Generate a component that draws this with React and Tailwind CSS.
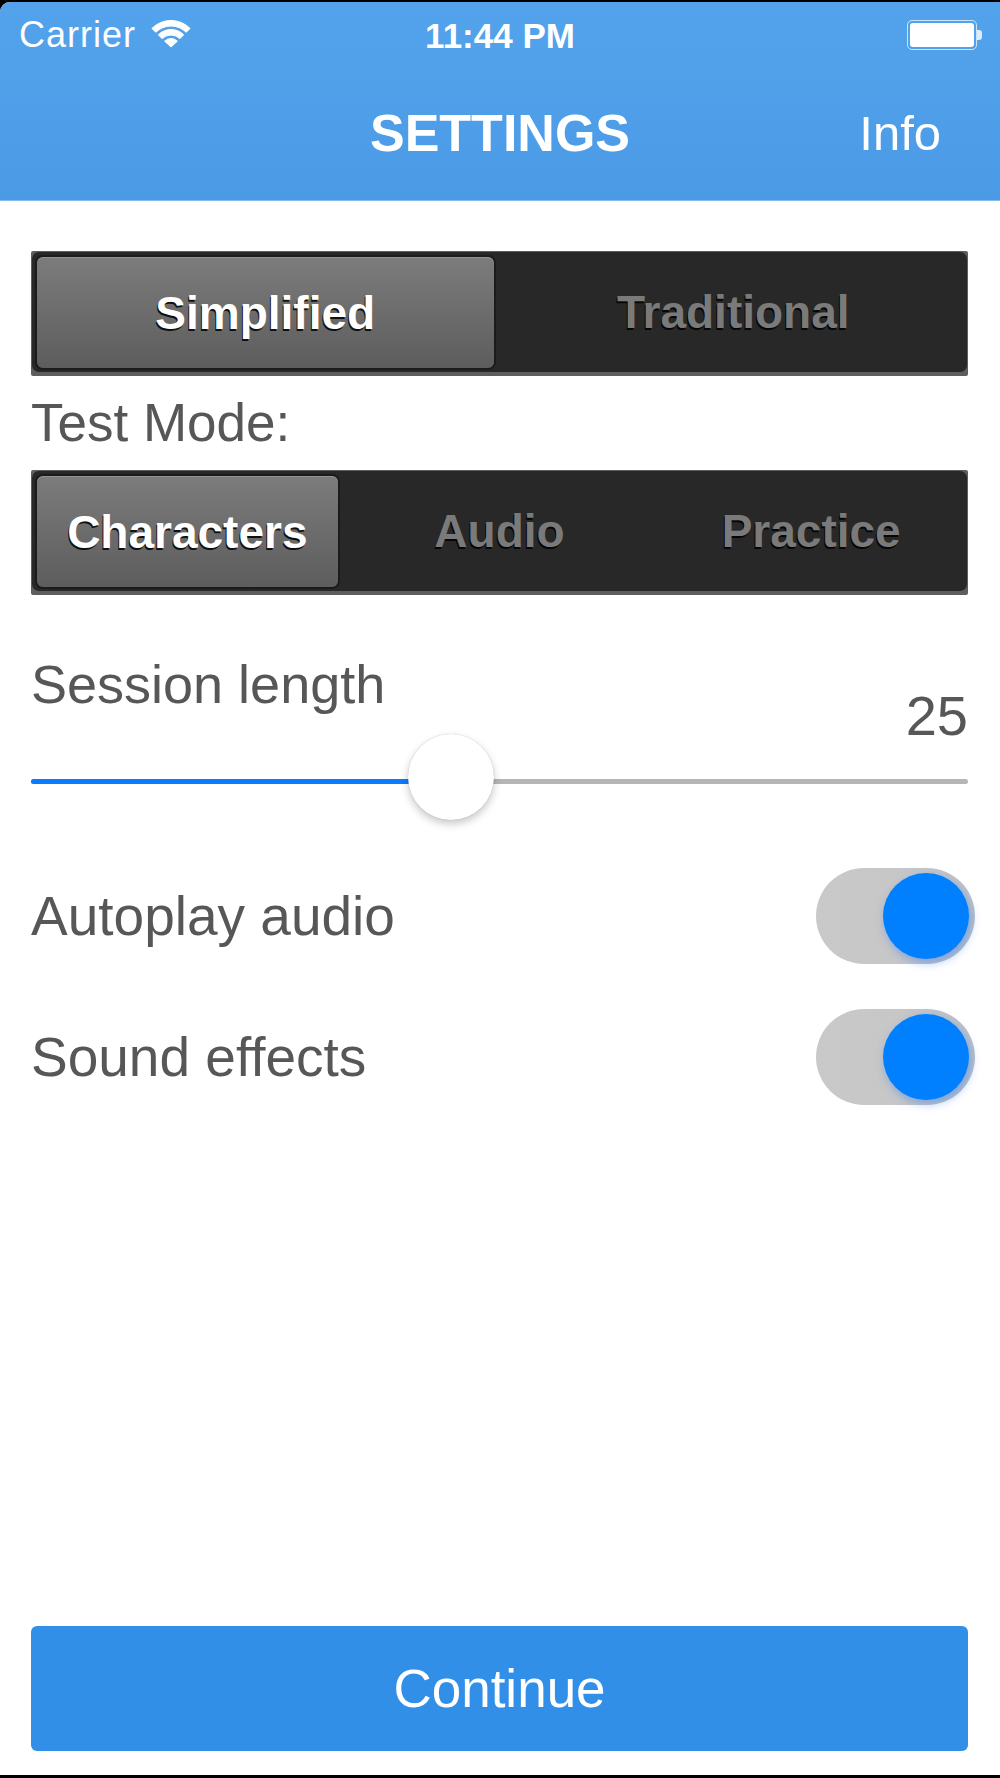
import React from "react";

function Wifi() {
  return (
    <svg width="40" height="28" viewBox="0 0 40 28" className="block">
      <g fill="#ffffff" stroke="#ffffff" strokeWidth="1" strokeLinejoin="round">
        <path d="M0.91 8.41 A27 27 0 0 1 39.09 8.41 L35.2 12.3 A21.5 21.5 0 0 0 4.8 12.3 Z" />
        <path d="M7.27 14.77 A18 18 0 0 1 32.73 14.77 L28.84 18.66 A12.5 12.5 0 0 0 11.16 18.66 Z" />
        <path d="M20 27 L13.64 21.14 A9 9 0 0 1 26.36 21.14 Z" />
      </g>
    </svg>
  );
}

function Battery() {
  return (
    <div className="flex items-center">
      <div className="w-[70px] h-[30px] rounded-[5px] border border-white/70 p-[2px]">
        <div className="w-full h-full rounded-[3px] bg-white" />
      </div>
      <div className="w-[5px] h-[10px] rounded-r-[3px] bg-white/80" />
    </div>
  );
}

function Segmented({ items, selected }) {
  const cols = items.length === 2 ? "grid-cols-2" : "grid-cols-3";
  return (
    <div className="bg-[#5e5e5e] px-px pt-px pb-[4px] rounded-[2px]">
      <div className={`grid ${cols} h-[120px] bg-[#282828] rounded-[7px]`}>
        {items.map((it, i) =>
          i === selected ? (
            <div key={it} className="pl-[5px] pr-[6px] pt-[5px] pb-[4px]">
              <div className="h-full rounded-[6px] bg-gradient-to-b from-[#7c7c7c] to-[#5d5d5d] shadow-[0_0_0_2px_#1b1b1b,inset_0_1px_0_rgba(255,255,255,0.18)] flex items-center justify-center">
                <span className="text-[46px] leading-none font-bold text-white [text-shadow:-1px_2px_0_rgba(0,0,0,0.85)]">
                  {it}
                </span>
              </div>
            </div>
          ) : (
            <div key={it} className="flex items-center justify-center">
              <span className="text-[46px] leading-none font-bold text-[#7a7a7a] [text-shadow:-1px_2px_0_rgba(0,0,0,0.85)]">
                {it}
              </span>
            </div>
          )
        )}
      </div>
    </div>
  );
}

function Toggle() {
  return (
    <div className="relative w-[159px] h-[96px] -mr-[7px] rounded-full bg-gradient-to-r from-[#c9c9c9] via-[#c7c7c7] to-[#bcc2c8]">
      <div className="absolute right-[6px] top-[5px] w-[86px] h-[86px] rounded-full bg-[#0080ff] shadow-[2px_4px_10px_rgba(0,100,255,0.35)]" />
    </div>
  );
}

export default function App() {
  return (
    <div className="w-[1000px] h-[1778px] bg-black flex flex-col overflow-hidden font-['Liberation_Sans',Arial,sans-serif]">
      <div className="h-[2px] shrink-0" />
      <div className="flex-1 bg-white rounded-tl-[10px] flex flex-col overflow-hidden">
        {/* Header */}
        <div className="bg-gradient-to-b from-[#53a3ec] to-[#4a9ae6] border-b border-[#86bdf0] shrink-0">
          <div className="h-[66px] grid grid-cols-[1fr_auto_1fr] items-center text-white">
            <div className="flex items-center pl-[19px]">
              <span className="text-[36px] leading-none tracking-[1px]">Carrier</span>
              <div className="ml-[15px] -mt-[2px]">
                <Wifi />
              </div>
            </div>
            <span className="text-[35px] leading-none font-bold">11:44 PM</span>
            <div className="flex justify-end pr-[18px]">
              <Battery />
            </div>
          </div>
          <div className="h-[132px] grid grid-cols-[1fr_auto_1fr] items-center pb-[2px] text-white">
            <div />
            <span className="text-[52px] leading-none font-bold">SETTINGS</span>
            <div className="flex justify-end pr-[59px]">
              <span className="text-[49px] leading-none">Info</span>
            </div>
          </div>
        </div>

        {/* Content */}
        <div className="flex-1 flex flex-col pl-[31px] pr-[32px]">
          <div className="mt-[50px]">
            <Segmented items={["Simplified", "Traditional"]} selected={0} />
          </div>

          <div className="mt-[20px] text-[53px] leading-none text-[#575757]">Test Mode:</div>

          <div className="mt-[21px]">
            <Segmented items={["Characters", "Audio", "Practice"]} selected={0} />
          </div>

          <div className="mt-[62px] flex justify-between items-start text-[#575757]">
            <span className="text-[54px] leading-none">Session length</span>
            <span className="text-[56px] leading-none mt-[31px]">25</span>
          </div>

          <div className="relative h-[86px] -mt-[10px]">
            <div className="absolute left-0 right-0 top-[45px] h-[5px] rounded-full bg-[#b5b5b5]" />
            <div className="absolute left-0 top-[45px] h-[5px] w-[420px] rounded-full bg-[#0a7bff]" />
            <div className="absolute left-[377px] top-0 w-[86px] h-[86px] rounded-full bg-white shadow-[0_4px_8px_rgba(0,0,0,0.22),0_0_1px_rgba(0,0,0,0.25)]" />
          </div>

          <div className="mt-[48px] h-[96px] flex items-center justify-between">
            <span className="text-[55px] leading-none text-[#575757]">Autoplay audio</span>
            <Toggle />
          </div>

          <div className="mt-[45px] h-[96px] flex items-center justify-between">
            <span className="text-[55px] leading-none text-[#575757]">Sound effects</span>
            <Toggle />
          </div>

          <div className="flex-1" />

          <button className="h-[125px] mb-[24px] rounded-[6px] bg-[#318fe8] flex items-center justify-center">
            <span className="text-[53px] leading-none text-white">Continue</span>
          </button>
        </div>
      </div>
      <div className="h-[3px] shrink-0" />
    </div>
  );
}
